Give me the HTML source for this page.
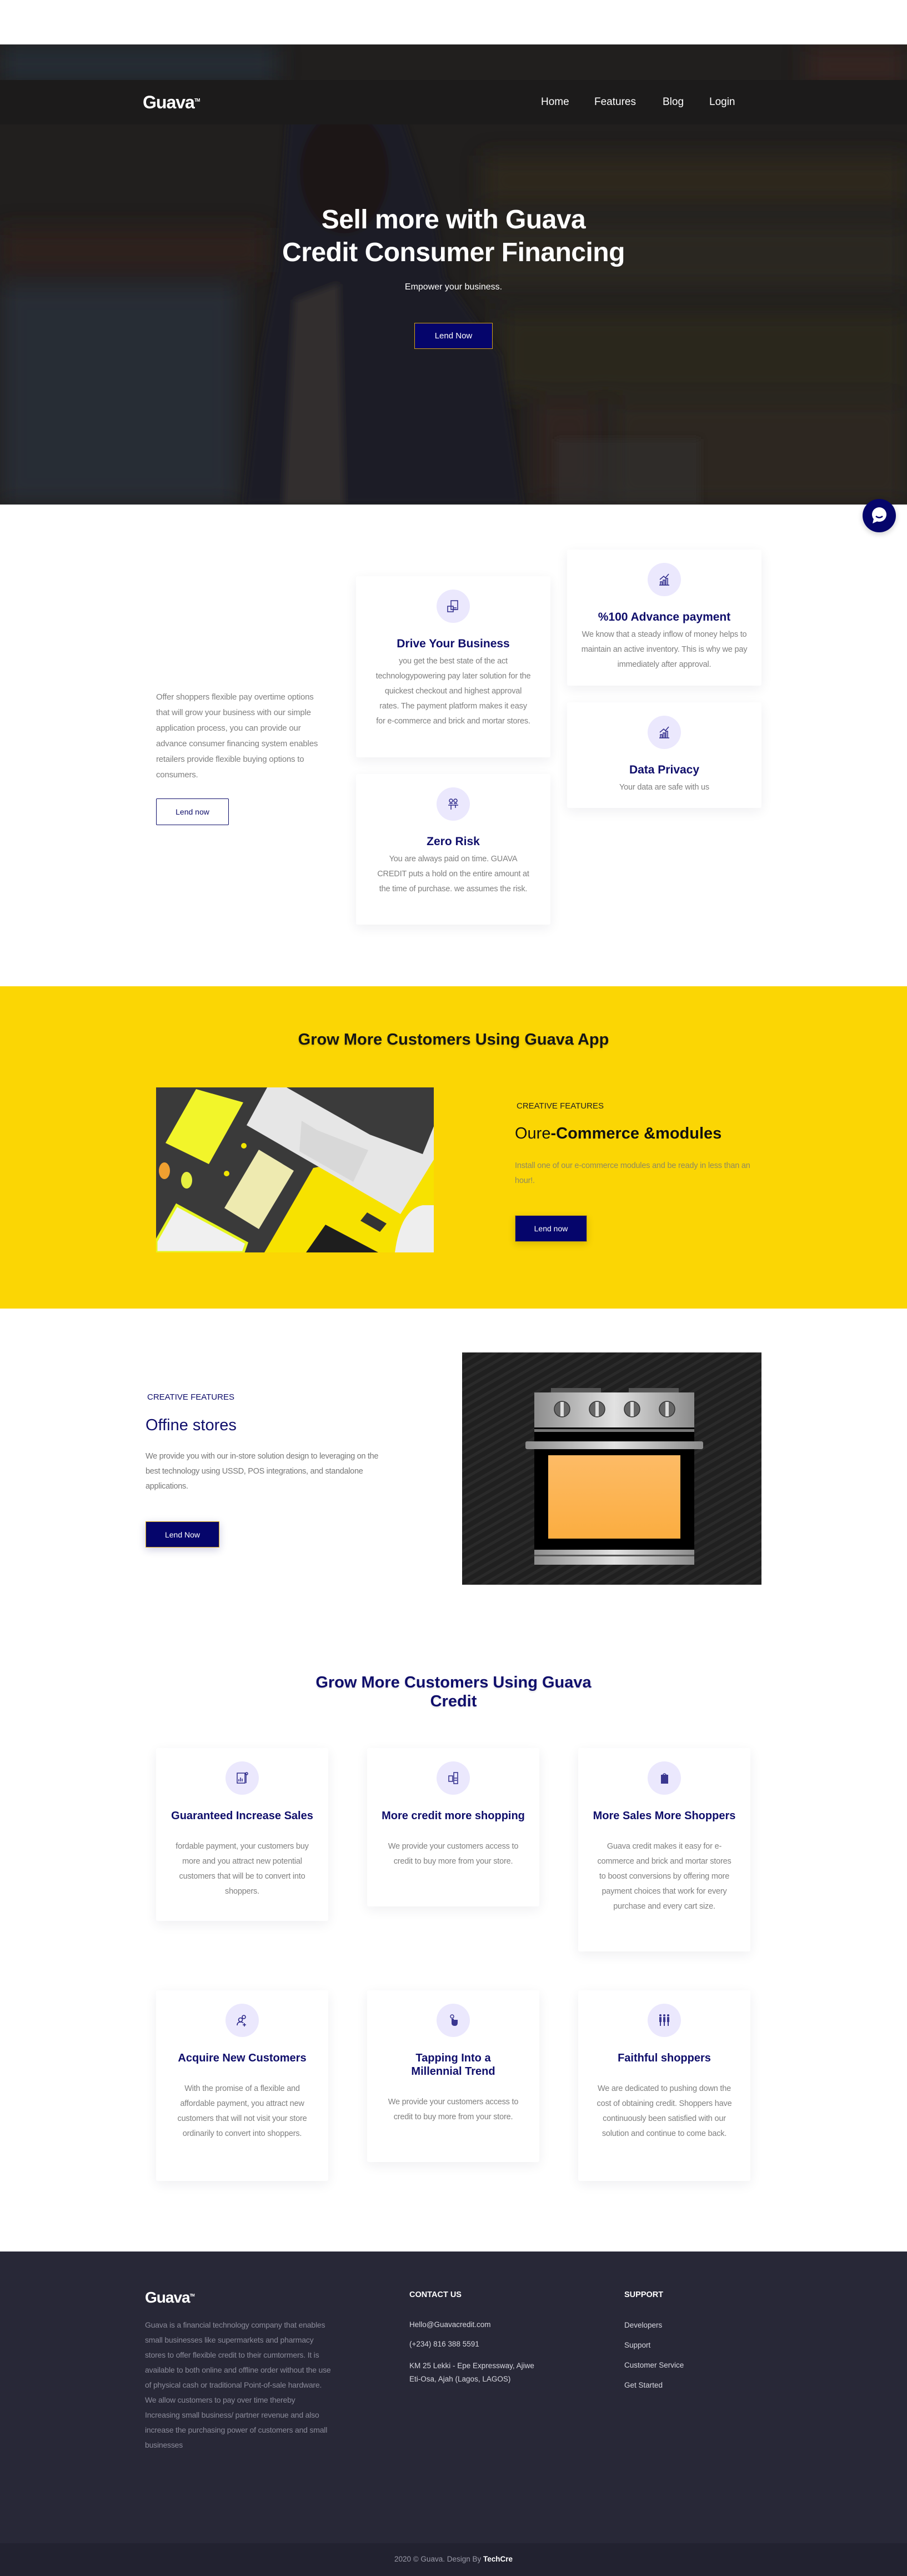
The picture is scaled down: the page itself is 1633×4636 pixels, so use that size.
<!DOCTYPE html>
<html><head><meta charset="utf-8"><style>
*{margin:0;padding:0;box-sizing:border-box}
body{width:1633px;height:4636px;position:relative;background:#fff;font-family:"Liberation Sans",sans-serif;overflow:hidden}
.a{position:absolute}
.nav a{position:absolute;color:#fff;font-size:19px;top:173px;text-decoration:none}
.card{position:absolute;background:#fff;box-shadow:0 6px 22px rgba(30,30,60,.07);border-radius:3px}
.ic{position:absolute;width:60px;height:60px;border-radius:50%;background:#ebe8fd;top:24px;left:50%;margin-left:-30px;display:flex;align-items:center;justify-content:center}
.card h3{position:absolute;left:0;right:0;text-align:center;color:#0f0e6b;font-size:21px;font-weight:600;line-height:30px;top:107px}
.card p{position:absolute;left:35px;right:35px;text-align:center;color:#808080;font-size:14.5px;line-height:27px;top:140px;letter-spacing:-.2px}
.c2 h3{font-size:20px;line-height:24px;top:110px;left:28px;right:28px}
.c2 p{top:164px;left:28px;right:28px}
.btn{position:absolute;display:flex;align-items:center;justify-content:center;font-size:14px}
.navybtn{background:#05056b;color:#fff;border:1px solid #d4a416}
</style></head><body>

<!-- HERO -->
<div class="a" style="left:0;top:80px;width:1633px;height:828px;overflow:hidden;background:#211f1e">
<svg width="1633" height="828" style="position:absolute;left:0;top:0">
<defs><filter id="b"><feGaussianBlur stdDeviation="20"/></filter><filter id="b2"><feGaussianBlur stdDeviation="6"/></filter></defs>
<g filter="url(#b)" opacity=".75">
<rect x="0" y="0" width="500" height="70" fill="#28313d"/>
<rect x="1450" y="0" width="183" height="80" fill="#3a2624"/>
<rect x="0" y="330" width="480" height="80" fill="#33241f"/>
<rect x="0" y="430" width="430" height="398" fill="#2c303d"/>
<rect x="870" y="200" width="763" height="90" fill="#312b1e"/>
<rect x="870" y="320" width="763" height="120" fill="#2d2920"/>
<rect x="900" y="480" width="733" height="150" fill="#2e291e"/>
<rect x="1100" y="640" width="533" height="188" fill="#302c20"/>
<rect x="960" y="640" width="120" height="180" fill="#352822"/>
</g>
<g filter="url(#b2)">
<path d="M520 120 Q600 80 720 120 L780 300 L800 420 L900 560 L940 828 L440 828 L470 560 L500 400 Z" fill="#1b1e28"/>
<ellipse cx="620" cy="230" rx="80" ry="110" fill="#1c1816"/>
<path d="M530 460 L610 430 L620 828 L510 828 Z" fill="#302f2e"/>
<rect x="1000" y="710" width="260" height="118" fill="#333" opacity=".5"/>
</g>
</svg>
</div>
<div class="a" style="left:0;top:144px;width:1633px;height:80px;background:#1c1b1b"></div>
<div class="a" style="left:257px;top:166px;color:#fff;font-size:32px;font-weight:bold;letter-spacing:-1px">Guava<span style="font-size:8px;vertical-align:top;position:relative;top:10px">TM</span></div>
<div class="nav"><a style="left:974px">Home</a><a style="left:1070px">Features</a><a style="left:1193px">Blog</a><a style="left:1277px">Login</a></div>
<div class="a" style="left:0;width:1633px;top:366px;text-align:center;color:#fff;font-size:48px;line-height:59px;font-weight:600;letter-spacing:-.5px">Sell more with Guava<br>Credit Consumer Financing</div>
<div class="a" style="left:0;width:1633px;top:508px;text-align:center;color:#fff;font-size:16px">Empower your business.</div>
<div class="btn navybtn" style="left:746px;top:581px;width:141px;height:47px;font-size:15px">Lend Now</div>
<div class="a" style="left:1553px;top:898px;width:60px;height:60px;border-radius:50%;background:#05056b;box-shadow:0 3px 10px rgba(0,0,0,.2)">
<svg width="60" height="60"><circle cx="30" cy="28" r="13" fill="#fff"/><path d="M20 36 L18 44 L27 40 Z" fill="#fff"/><path d="M24 31 Q30 36 36 31" stroke="#05056b" stroke-width="2.5" fill="none"/></svg></div>

<!-- FEATURES -->
<div class="a" style="left:281px;top:1241px;width:295px;color:#808080;font-size:15px;line-height:28px;letter-spacing:-.2px">Offer shoppers flexible pay overtime options that will grow your business with our simple application process, you can provide our advance consumer financing system enables retailers provide flexible buying options to consumers.</div>
<div class="btn" style="left:281px;top:1437px;width:131px;height:48px;border:1.5px solid #0f0e6b;color:#0f0e6b;font-size:14px;border-radius:2px">Lend now</div>

<div class="card" style="left:641px;top:1037px;width:350px;height:326px"><div class="ic"><svg width="26" height="26" fill="none" stroke="#2e2a8a" stroke-width="1.5"><rect x="9" y="3" width="12" height="16"/><rect x="3" y="13" width="10" height="10"/><path d="M13 16h6M13 19h6"/></svg></div><h3>Drive Your Business</h3><p>you get the best state of the act technologypowering pay later solution for the quickest checkout and highest approval rates. The payment platform makes it easy for e-commerce and brick and mortar stores.</p></div>
<div class="card" style="left:1021px;top:989px;width:350px;height:245px"><div class="ic"><svg width="26" height="26" fill="none" stroke="#2e2a8a" stroke-width="1.5"><path d="M4 23h18M6 23v-6h3v6M11 23v-9h3v9M16 23v-12h3v12M5 13l7-6 3 3 6-7"/></svg></div><h3>%100 Advance payment</h3><p style="left:25px;right:25px">We know that a steady inflow of money helps to maintain an active inventory. This is why we pay immediately after approval.</p></div>
<div class="card" style="left:1021px;top:1264px;width:350px;height:190px"><div class="ic"><svg width="26" height="26" fill="none" stroke="#2e2a8a" stroke-width="1.5"><path d="M4 23h18M6 23v-6h3v6M11 23v-9h3v9M16 23v-12h3v12M5 13l7-6 3 3 6-7"/></svg></div><h3>Data Privacy</h3><p>Your data are safe with us</p></div>
<div class="card" style="left:641px;top:1393px;width:350px;height:271px"><div class="ic"><svg width="26" height="26" fill="none" stroke="#2e2a8a" stroke-width="1.5"><circle cx="9" cy="7" r="3"/><circle cx="17" cy="7" r="3"/><path d="M4 15h18M9 15v8M17 15v5M6 12h6M14 12h6"/></svg></div><h3>Zero Risk</h3><p>You are always paid on time. GUAVA CREDIT puts a hold on the entire amount at the time of purchase. we assumes the risk.</p></div>

<!-- YELLOW -->
<div class="a" style="left:0;top:1775px;width:1633px;height:580px;background:#fbd604"></div>
<div class="a" style="left:0;width:1633px;top:1855px;text-align:center;color:#161616;font-size:29px;font-weight:600;text-shadow:0 2px 3px rgba(0,0,0,.15)">Grow More Customers Using Guava App</div>
<svg class="a" style="left:281px;top:1957px" width="500" height="297">
<rect width="500" height="297" fill="#3a3a3a"/>
<polygon points="283,145 195,297 500,297 500,100" fill="#f7e200"/>
<polygon points="200,0 163,68 440,228 500,130 500,0" fill="#e6e6e6"/>
<polygon points="235,0 385,85 480,120 500,70 500,0" fill="#3b3b3b"/>
<polygon points="262,60 290,77 382,113 355,170 258,115" fill="#d8d8d8"/>
<polygon points="17,100 72,3 157,27 95,138" fill="#f2f52a"/>
<polygon points="123,217 185,112 248,150 185,255" fill="#eeeab0"/>
<polygon points="0,277 37,212 163,280 157,297 0,297" fill="#f0f0f0" stroke="#e6f520" stroke-width="5"/>
<polygon points="270,297 305,247 400,297" fill="#1e1e1e"/>
<polygon points="368,240 380,225 415,245 403,260" fill="#333"/>
<path d="M430 297 Q440 220 480 212 L500 212 L500 297 Z" fill="#eee"/>
<circle cx="158" cy="105" r="5" fill="#f2e600"/><circle cx="127" cy="155" r="5" fill="#f2e600"/>
<ellipse cx="15" cy="150" rx="10" ry="15" fill="#f0a030"/><ellipse cx="55" cy="167" rx="10" ry="15" fill="#e6f040"/>
</svg>
<div class="a" style="left:930px;top:1982px;color:#222;font-size:15px">CREATIVE FEATURES</div>
<div class="a" style="left:927px;top:2024px;color:#111;font-size:29px">Oure<b>-Commerce &amp;modules</b></div>
<div class="a" style="left:927px;top:2085px;width:430px;color:#8f8a60;font-size:14.5px;line-height:27px;letter-spacing:-.2px">Install one of our e-commerce modules and be ready in less than an hour!.</div>
<div class="btn navybtn" style="left:927px;top:2187px;width:130px;height:48px;border-color:#c9a614;box-shadow:0 4px 12px rgba(0,0,0,.15)">Lend now</div>

<!-- OFFLINE -->
<div class="a" style="left:265px;top:2506px;color:#0f0e6b;font-size:15px">CREATIVE FEATURES</div>
<div class="a" style="left:262px;top:2549px;color:#0f0e6b;font-size:29px">Offine stores</div>
<div class="a" style="left:262px;top:2608px;width:440px;color:#777;font-size:14.5px;line-height:27px;letter-spacing:-.3px">We provide you with our in-store solution design to leveraging on the best technology using USSD, POS integrations, and standalone applications.</div>
<div class="btn navybtn" style="left:262px;top:2738px;width:133px;height:47px;box-shadow:0 4px 14px rgba(5,5,107,.2)">Lend Now</div>
<svg class="a" style="left:832px;top:2434px" width="539" height="418">
<defs><pattern id="st" width="14" height="14" patternUnits="userSpaceOnUse" patternTransform="rotate(-30)"><rect width="14" height="14" fill="#202020"/><rect width="14" height="5" fill="#2a2a2a"/></pattern>
<linearGradient id="sv" x1="0" x2="1"><stop offset="0" stop-color="#8c8c8c"/><stop offset=".5" stop-color="#e2e2e2"/><stop offset="1" stop-color="#8a8a8a"/></linearGradient>
<linearGradient id="or" x1="0" y1="0" x2="0" y2="1"><stop offset="0" stop-color="#fdbb66"/><stop offset="1" stop-color="#fbad40"/></linearGradient></defs>
<rect width="539" height="418" fill="url(#st)"/>
<rect x="160" y="64" width="90" height="8" fill="#555"/><rect x="300" y="64" width="90" height="8" fill="#555"/>
<rect x="130" y="72" width="288" height="63" fill="url(#sv)"/>
<g fill="#666" stroke="#333" stroke-width="1.5"><circle cx="180" cy="102" r="14"/><circle cx="243" cy="102" r="14"/><circle cx="306" cy="102" r="14"/><circle cx="369" cy="102" r="14"/></g>
<g fill="#ddd"><rect x="177" y="89" width="6" height="26"/><rect x="240" y="89" width="6" height="26"/><rect x="303" y="89" width="6" height="26"/><rect x="366" y="89" width="6" height="26"/></g>
<rect x="130" y="135" width="288" height="220" fill="#000"/>
<rect x="130" y="138" width="288" height="5" fill="#777"/>
<rect x="114" y="160" width="320" height="14" rx="3" fill="url(#sv)"/>
<rect x="155" y="185" width="238" height="150" fill="url(#or)"/>
<rect x="130" y="355" width="288" height="27" fill="url(#sv)"/>
<rect x="130" y="364" width="288" height="3" fill="#555"/>
</svg>

<!-- CREDIT SECTION -->
<div class="a" style="left:0;width:1633px;top:3011px;text-align:center;color:#0f0e6b;font-size:29px;line-height:34px;font-weight:600;text-shadow:0 2px 3px rgba(0,0,0,.12)">Grow More Customers Using Guava<br>Credit</div>

<div class="card c2" style="left:281px;top:3146px;width:310px;height:311px"><div class="ic"><svg width="26" height="26" fill="none" stroke="#2e2a8a" stroke-width="1.5"><rect x="4" y="4" width="14" height="18"/><path d="M7 19v-4M10 19v-7M13 19v-5M20 5v17"/><circle cx="21" cy="5" r="2"/></svg></div><h3 style="left:10px;right:10px">Guaranteed Increase Sales</h3><p>fordable payment, your customers buy more and you attract new potential customers that will be to convert into shoppers.</p></div>
<div class="card c2" style="left:661px;top:3146px;width:310px;height:285px"><div class="ic"><svg width="26" height="26" fill="none" stroke="#2e2a8a" stroke-width="1.5"><rect x="14" y="3" width="7" height="20"/><rect x="5" y="9" width="7" height="10"/><path d="M15 13h5M15 17h5"/></svg></div><h3 style="left:10px;right:10px">More credit more shopping</h3><p>We provide your customers access to credit to buy more from your store.</p></div>
<div class="card c2" style="left:1041px;top:3146px;width:310px;height:366px"><div class="ic"><svg width="26" height="26"><rect x="7" y="7" width="13" height="16" fill="#3a3790"/><path d="M10 8 Q13 2 17 8" stroke="#3a3790" fill="none" stroke-width="1.5"/></svg></div><h3 style="left:10px;right:10px">More Sales More Shoppers</h3><p>Guava credit makes it easy for e-commerce and brick and mortar stores to boost conversions by offering more payment choices that work for every purchase and every cart size.</p></div>

<div class="card c2" style="left:281px;top:3582px;width:310px;height:343px"><div class="ic"><svg width="26" height="26" fill="none" stroke="#2e2a8a" stroke-width="1.6"><circle cx="10" cy="12" r="3.5"/><circle cx="16" cy="7" r="3"/><path d="M4 22q0-6 6-6q4 0 5 2M17 18v6M14 21h6"/></svg></div><h3 style="left:10px;right:10px">Acquire New Customers</h3><p style="left:22px;right:22px">With the promise of a flexible and affordable payment, you attract new customers that will not visit your store ordinarily to convert into shoppers.</p></div>
<div class="card c2" style="left:661px;top:3582px;width:310px;height:309px"><div class="ic"><svg width="26" height="26"><path d="M10 10v8q0 5 6 5q5 0 5-6v-5h-7v-2z" fill="#3a3790"/><circle cx="11" cy="6" r="3" fill="none" stroke="#3a3790" stroke-width="1.5"/></svg></div><h3 style="left:40px;right:40px">Tapping Into a Millennial Trend</h3><p style="top:188px">We provide your customers access to credit to buy more from your store.</p></div>
<div class="card c2" style="left:1041px;top:3582px;width:310px;height:343px"><div class="ic"><svg width="26" height="26" fill="#3a3790"><circle cx="6" cy="4" r="2"/><circle cx="13" cy="4" r="2"/><circle cx="20" cy="4" r="2"/><rect x="4" y="7" width="4" height="9"/><rect x="11" y="7" width="4" height="9"/><rect x="18" y="7" width="4" height="9"/><rect x="5" y="15" width="2" height="8"/><rect x="12" y="15" width="2" height="8"/><rect x="19" y="15" width="2" height="8"/></svg></div><h3 style="left:10px;right:10px">Faithful shoppers</h3><p style="left:32px;right:32px">We are dedicated to pushing down the cost of obtaining credit. Shoppers have continuously been satisfied with our solution and continue to come back.</p></div>

<!-- FOOTER -->
<div class="a" style="left:0;top:4052px;width:1633px;height:525px;background:#282837"></div>
<div class="a" style="left:0;top:4577px;width:1633px;height:59px;background:#222230"></div>
<div class="a" style="left:261px;top:4119px;color:#fff;font-size:28px;font-weight:bold;letter-spacing:-1px">Guava<span style="font-size:7px;vertical-align:top;position:relative;top:9px">TM</span></div>
<div class="a" style="left:261px;top:4171px;width:335px;color:#8a8a99;font-size:14px;line-height:27px;letter-spacing:-.2px">Guava is a financial technology company that enables small businesses like supermarkets and pharmacy stores to offer flexible credit to their cumtormers. It is available to both online and offline order without the use of physical cash or traditional Point-of-sale hardware. We allow customers to pay over time thereby Increasing small business/ partner revenue and also increase the purchasing power of customers and small businesses</div>
<div class="a" style="left:737px;top:4122px;color:#fff;font-size:14.5px;font-weight:600">CONTACT US</div>
<div class="a" style="left:737px;top:4175px;color:#d8d8e0;font-size:13.5px;line-height:18px">Hello@Guavacredit.com</div>
<div class="a" style="left:737px;top:4211px;color:#d8d8e0;font-size:13.5px">(+234) 816 388 5591</div>
<div class="a" style="left:737px;top:4246px;width:225px;color:#d8d8e0;font-size:13.5px;line-height:24px">KM 25 Lekki - Epe Expressway, Ajiwe Eti-Osa, Ajah (Lagos, LAGOS)</div>
<div class="a" style="left:1124px;top:4122px;color:#fff;font-size:14.5px;font-weight:600">SUPPORT</div>
<div class="a" style="left:1124px;top:4167px;color:#d8d8e0;font-size:13.5px;line-height:36px">Developers<br>Support<br>Customer Service<br>Get Started</div>
<div class="a" style="left:0;width:1633px;top:4598px;text-align:center;color:#9a9aa8;font-size:13.5px">2020 © Guava. Design By <b style="color:#fff">TechCre</b></div>
</body></html>
